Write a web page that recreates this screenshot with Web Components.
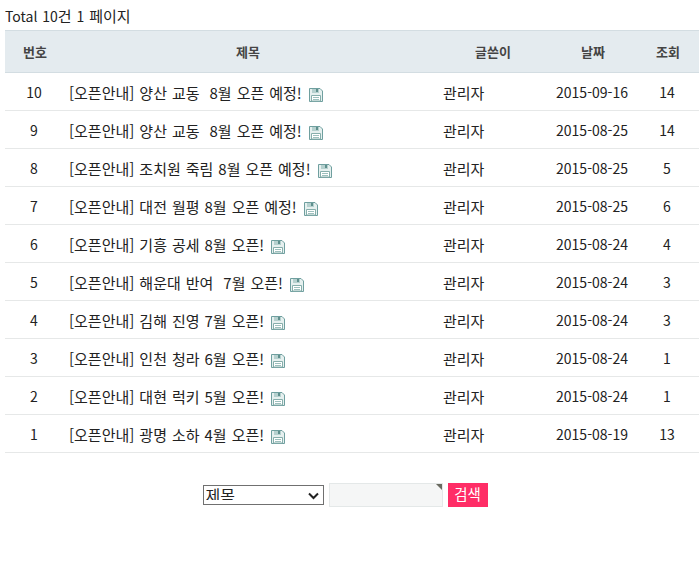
<!DOCTYPE html>
<html lang="ko">
<head>
<meta charset="utf-8">
<title>게시판</title>
<style>
html, body { margin: 0; background: #fff; }
body { font-family: "Noto Sans CJK KR", "Noto Sans", sans-serif; font-size: 14px; color: #222; }
</style>
</head>
<body>
<board-page></board-page>
<script>
//save icon next to the title
class SaveIcon extends HTMLElement {
  constructor() {
    super();
    this.attachShadow({ mode: 'open' }).innerHTML = `
<style>
:host { display: inline-flex; margin: 6px 0 0 7px; }
svg { display: block; }
</style>
<svg width="14" height="14" viewBox="0 0 14 14">
  <path d="M.5.5H11L13.500 3V13.500H.5Z" fill="#e6f0ef" stroke="#6f9f9f"/>
  <rect x="3" y="1" width="7" height="4" fill="#b5d0ce"/>
  <rect x="7" y="1" width="2" height="3" fill="#5f8f8d"/>
  <path d="M2.500 7.500H11.500V13H2.500Z" fill="#fff" stroke="#86aeab"/>
  <path d="M4 9.500H10M4 11.500H10" stroke="#9dc0bd"/>
</svg>`;
  }
}

class BoardHead extends HTMLElement {
  constructor() {
    super();
    this.attachShadow({ mode: 'open' }).innerHTML = `
<style>
:host {
  display: grid;
  grid-template-columns: 60px 372px 112px 88px 62px;
  height: 41px;
  align-items: center;
  text-align: center;
  background: #e4ebef;
  border-top: 1px solid #d3dde2;
  border-bottom: 1px solid #d3dde2;
  font-weight: 700;
  font-size: 13px;
  color: #444;
}
.title { padding-right: 6px; }
</style>
<div>번호</div><div class="title">제목</div><div>글쓴이</div><div>날짜</div><div>조회</div>`;
  }
}

class BoardRow extends HTMLElement {
  constructor() {
    super();
    this.attachShadow({ mode: 'open' }).innerHTML = `
<style>
:host {
  display: grid;
  grid-template-columns: 60px 372px 112px 88px 62px;
  height: 37px;
  align-items: center;
  text-align: center;
  border-bottom: 1px solid #e6e8e8;
  color: #222;
}
.num, .date, .hit { padding: 1px 2px 0 0; }
.title { display: flex; align-items: center; padding: 1px 0 0 4px; text-align: left; white-space: pre; font-size: 15px; word-spacing: .8px; }
.writer { text-align: left; padding-left: 6px; font-size: 15px; padding-top: 1px; }
</style>
<div class="num"></div>
<div class="title"><span class="subject"></span><save-icon></save-icon></div>
<div class="writer">관리자</div>
<div class="date"></div>
<div class="hit"></div>`;
  }
  connectedCallback() {
    const r = this.shadowRoot;
    r.querySelector('.num').textContent = this.getAttribute('num');
    r.querySelector('.subject').textContent = this.getAttribute('subject');
    r.querySelector('.date').textContent = this.getAttribute('date');
    r.querySelector('.hit').textContent = this.getAttribute('hit');
  }
}

class SearchBar extends HTMLElement {
  constructor() {
    super();
    this.attachShadow({ mode: 'open' }).innerHTML = `
<style>
:host { display: flex; justify-content: center; align-items: center; gap: 5px; padding-right: 14px; }
.pick { position: relative; width: 121px; height: 20px; }
select {
  appearance: none; display: block; box-sizing: border-box;
  width: 121px; height: 20px; padding: 0 0 4px 2px; margin: 0;
  border: 1px solid #707070; border-radius: 0; background: #fff; color: #222;
  font: 16px/18px "Noto Sans CJK KR", sans-serif;
}
.pick svg { position: absolute; top: 7px; right: 5px; }
.box {
  position: relative; width: 114px; height: 24px; box-sizing: border-box;
  background: #f5f6f6; border: 1px solid #e4e8e8;
}
.box::after {
  content: ""; position: absolute; top: 0; right: 0;
  border-top: 6px solid #6a6a60; border-left: 6px solid transparent;
}
button {
  width: 40px; height: 24px; padding: 0 0 3px; border: 0; background: #ff2d66; color: #fff;
  font: 14.500px "Noto Sans CJK KR", sans-serif;
}
</style>
<div class="pick">
  <select><option>제목</option></select>
  <svg width="11" height="8" viewBox="0 0 11 8"><path d="M1 1.500L5.500 6L10 1.500" fill="none" stroke="#222" stroke-width="2"/></svg>
</div>
<div class="box"></div>
<button>검색</button>`;
  }
}

class BoardPage extends HTMLElement {
  constructor() {
    super();
    this.attachShadow({ mode: 'open' }).innerHTML = `
<style>
:host { display: block; padding: 0 1px 0 5px; }
.total { height: 30px; box-sizing: border-box; padding-top: 6px; line-height: 20px; word-spacing: 1px; }
.total span { font-size: 15px; }
search-bar { margin-top: 30px; }
</style>
<div class="total">Total 10<span>건</span> 1 <span>페이지</span></div>
<board-head></board-head>
<div id="rows"></div>
<search-bar></search-bar>`;
    const data = [
      [10, '[오픈안내] 양산 교동  8월 오픈 예정!', '2015-09-16', 14],
      [9, '[오픈안내] 양산 교동  8월 오픈 예정!', '2015-08-25', 14],
      [8, '[오픈안내] 조치원 죽림 8월 오픈 예정!', '2015-08-25', 5],
      [7, '[오픈안내] 대전 월평 8월 오픈 예정!', '2015-08-25', 6],
      [6, '[오픈안내] 기흥 공세 8월 오픈!', '2015-08-24', 4],
      [5, '[오픈안내] 해운대 반여  7월 오픈!', '2015-08-24', 3],
      [4, '[오픈안내] 김해 진영 7월 오픈!', '2015-08-24', 3],
      [3, '[오픈안내] 인천 청라 6월 오픈!', '2015-08-24', 1],
      [2, '[오픈안내] 대현 럭키 5월 오픈!', '2015-08-24', 1],
      [1, '[오픈안내] 광명 소하 4월 오픈!', '2015-08-19', 13]
    ];
    const rows = this.shadowRoot.getElementById('rows');
    data.forEach(d => {
      const row = document.createElement('board-row');
      row.setAttribute('num', d[0]);
      row.setAttribute('subject', d[1]);
      row.setAttribute('date', d[2]);
      row.setAttribute('hit', d[3]);
      rows.appendChild(row);
    });
  }
}

customElements.define('save-icon', SaveIcon);
customElements.define('board-head', BoardHead);
customElements.define('board-row', BoardRow);
customElements.define('search-bar', SearchBar);
customElements.define('board-page', BoardPage);
</script>
</body>
</html>
